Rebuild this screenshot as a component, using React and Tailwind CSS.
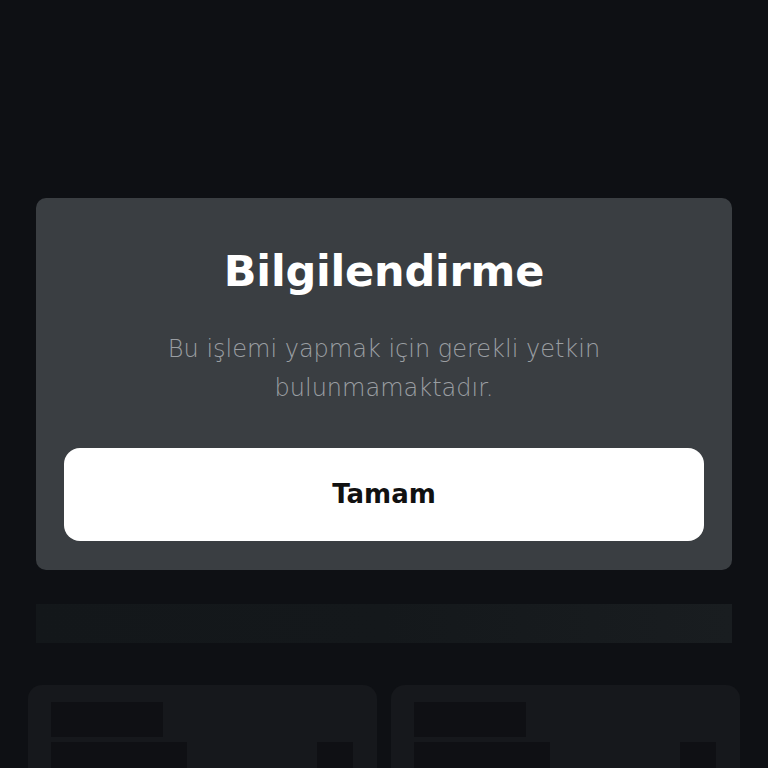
import React from "react";

// Skeleton card behind the dialog
const SkeletonCard = () => (
  <div className="flex-1 bg-[#16181c] rounded-t-[14px] pt-[17px] px-[23px] h-[90px]">
    <div className="w-[112px] h-[35px] bg-[#0f1014]" />
    <div className="flex justify-between mt-[5px]">
      <div className="w-[136px] h-[30px] bg-[#0f1014]" />
      <div className="w-[36px] h-[30px] bg-[#0f1014] mr-[1px]" />
    </div>
  </div>
);

const App = () => {
  return (
    <div
      className="relative w-[768px] h-[768px] overflow-hidden bg-[#0e1014]"
      style={{ fontFamily: "'DejaVu Sans', 'Noto Sans', sans-serif" }}
    >
      {/* Dimmed page content */}
      <div className="pt-[604px]">
        <div className="mx-[36px] h-[39px] bg-gradient-to-r from-[#13171a] via-[#14181b] to-[#191d20]" />
        <div className="flex gap-[14px] px-[28px] mt-[42px]">
          <SkeletonCard />
          <SkeletonCard />
        </div>
      </div>

      {/* Dialog */}
      <div className="absolute left-[36px] top-[198px] w-[696px] h-[372px] bg-[#3a3e42] rounded-[10px] flex flex-col items-center pt-[47px] px-[28px]">
        <h2 className="text-[43px] leading-[52px] font-bold text-white tracking-[-0.2px]">
          Bilgilendirme
        </h2>
        <p className="mt-[33px] text-[24px] leading-[39px] font-extralight text-[#9a9ea2] text-center w-[470px]">
          Bu işlemi yapmak için gerekli yetkin bulunmamaktadır.
        </p>
        <button className="mt-[40px] w-full h-[93px] bg-white rounded-[16px] text-[26px] font-bold text-[#111]">
          Tamam
        </button>
      </div>
    </div>
  );
};

export default App;
